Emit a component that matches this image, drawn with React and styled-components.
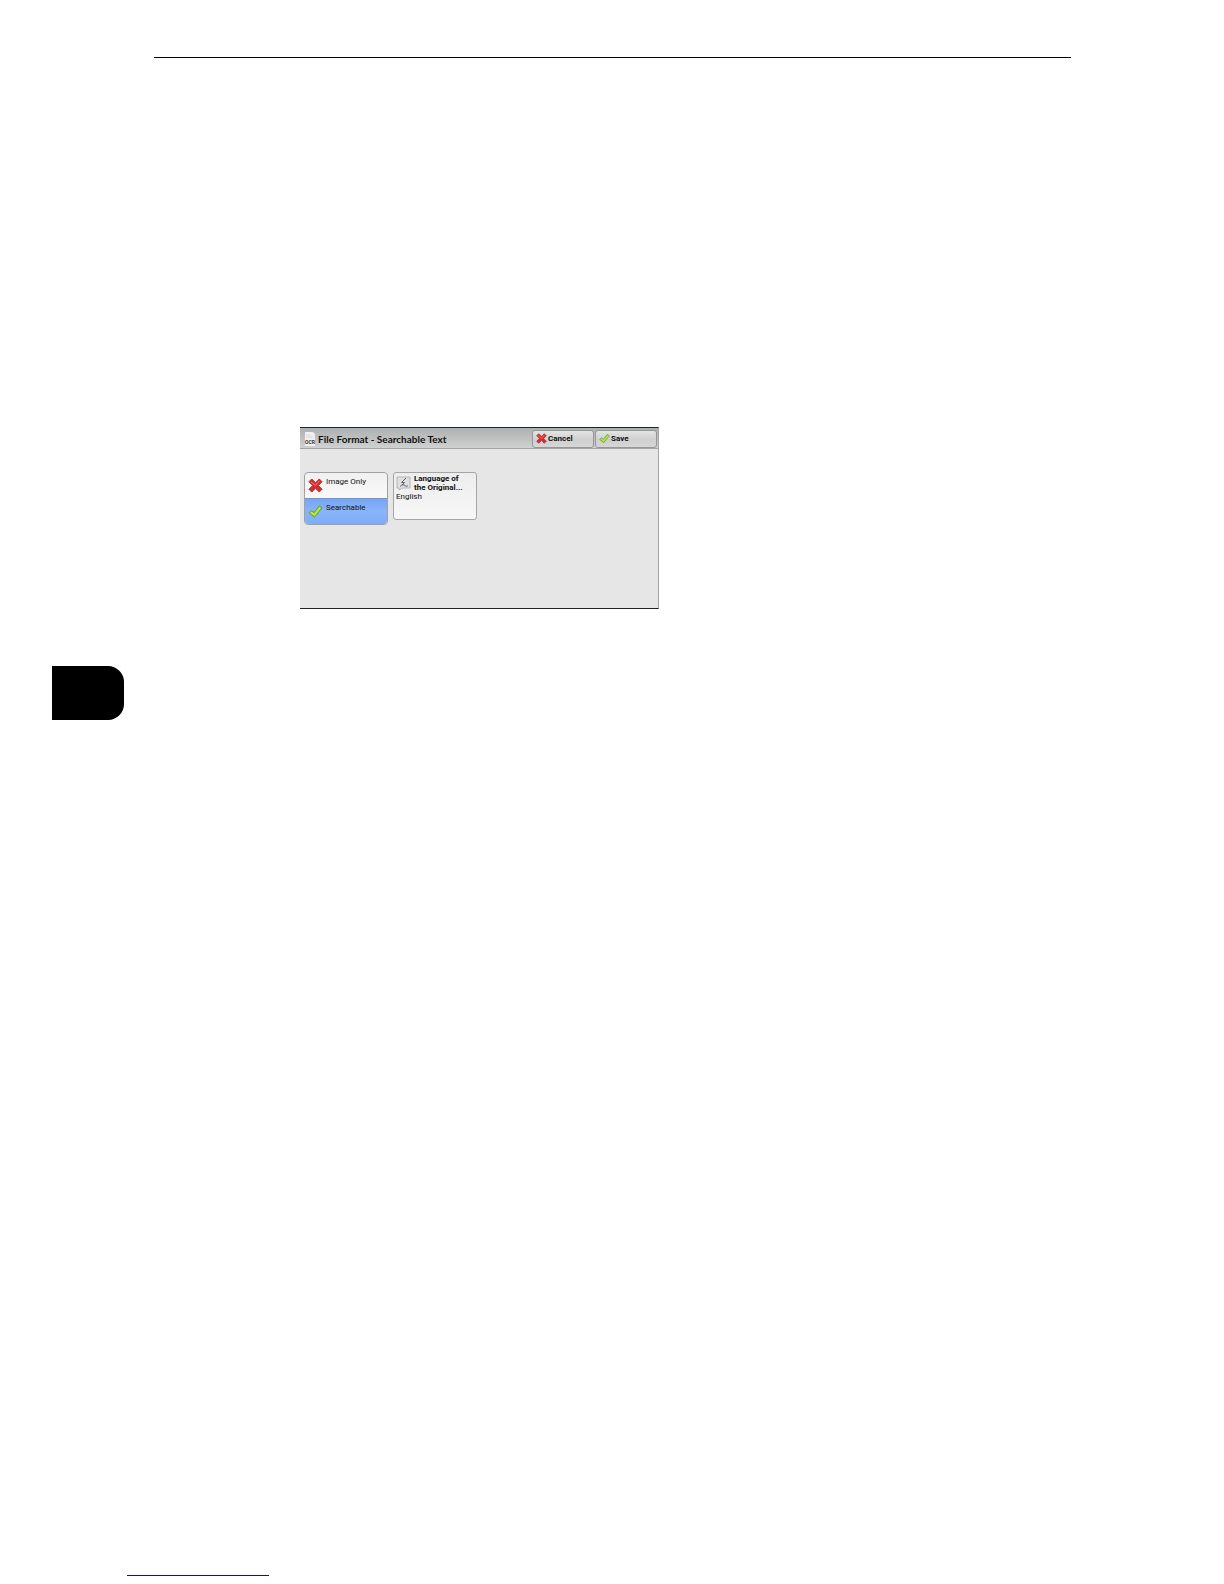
import React, { useState } from "react";
import styled, { createGlobalStyle, css } from "styled-components";

const Global = createGlobalStyle`
  *, *::before, *::after { box-sizing: border-box; }
  body { margin: 0; background: #fff; }
`;

const Page = styled.div`
  display: flex;
  flex-direction: column;
  min-height: 100vh;
  padding: 57px 0 8px;
  font-family: Roboto, "Noto Sans", sans-serif;
  color: #111;
`;

const TopRule = styled.hr`
  width: auto;
  height: 1px;
  margin: 0 153px 0 154px;
  border: 0;
  background: #000;
`;

const Content = styled.main`
  display: flex;
  flex-direction: column;
  flex: 1;
  padding-top: 369px;
`;

const Panel = styled.section`
  width: 100%;
  max-width: 359px;
  margin-left: 300px;
  border-top: 1px solid #20242b;
  border-right: 1px solid #a5a5a5;
  border-bottom: 1px solid #222;
  background: #e6e6e6;
`;

const TitleBar = styled.header`
  display: flex;
  align-items: center;
  gap: 2px;
  height: 21px;
  padding: 1px 1px 0 4px;
  border-bottom: 1px solid #a4a4a4;
  background: linear-gradient(#adb0b0, #d0d1d1);
`;

const Title = styled.h1`
  flex: 1;
  margin: 0;
  font-family: Lato, sans-serif;
  font-size: 10px;
  line-height: 14px;
  font-weight: 700;
  white-space: nowrap;
`;

const Actions = styled.div`
  display: flex;
  gap: 1px;
`;

const buttonReset = css`
  margin: 0;
  font-family: inherit;
  color: inherit;
  text-align: left;
  cursor: pointer;
`;

const ActionButton = styled.button`
  ${buttonReset}
  display: flex;
  align-items: center;
  gap: 1px;
  width: 62px;
  height: 18px;
  padding: 0 3px;
  border: 1px solid #969696;
  border-radius: 3px;
  background: linear-gradient(#e4e4e4, #cfcfcf 55%, #d7d7d7);
  font-size: 8px;
  line-height: 12px;
  font-weight: 700;
`;

const Body = styled.div`
  display: flex;
  align-items: flex-start;
  gap: 5px;
  min-height: 159px;
  padding: 23px 4px;
`;

const Options = styled.fieldset`
  width: 84px;
  min-width: 0;
  margin: 0;
  padding: 0;
  border: 1px solid #a0a0a5;
  border-radius: 4px;
  overflow: hidden;
`;

const Option = styled.label`
  display: flex;
  gap: 3px;
  height: 25px;
  padding: 3px 3px 0;
  background: ${(p) =>
    p.$selected
      ? "linear-gradient(#75a5f4, #8ab4fa 50%, #7eacf6)"
      : "linear-gradient(#f0f0f0, #f9f9f9)"};
  font-size: 8px;
  line-height: 12px;
  cursor: pointer;

  & + & { height: 26px; border-top: 1px solid #7794c8; }
  svg { margin-top: 2px; }
`;

const HiddenRadio = styled.input`
  position: absolute;
  width: 1px;
  height: 1px;
  margin: 0;
  opacity: 0;
`;

const LanguageButton = styled.button`
  ${buttonReset}
  display: flex;
  flex-direction: column;
  width: 84px;
  height: 48px;
  padding: 0 2px;
  border: 1px solid #a5a5a5;
  border-radius: 3px;
  background: linear-gradient(#ededed, #f7f7f7);
  font-size: 8px;
  line-height: 9px;
`;

const LanguageHeading = styled.span`
  display: flex;
  gap: 3px;
  padding-top: 1px;
  font-weight: 700;
  white-space: nowrap;
  svg { margin-top: 2px; }
`;

const SideTab = styled.div`
  width: 72px;
  height: 54px;
  margin: 57px 0 0 52px;
  border-radius: 0 16px 16px 0;
  background: #000;
`;

const FooterLine = styled.footer`
  width: 142px;
  height: 1px;
  margin-left: 127px;
  background: #101078;
`;

const Svg = styled.svg`
  flex: none;
  display: block;
`;

function CrossIcon({ size }) {
  return (
    <Svg width={size} height={size} viewBox="0 0 16 16" aria-hidden="true">
      <path
        d="M1 4 4 1 8 5 12 1 15 4 11 8 15 12 12 15 8 11 4 15 1 12 5 8Z"
        fill="#d92c2a"
        stroke="#a33330"
        strokeWidth="1"
        strokeLinejoin="round"
      />
      <path d="m3 4 5 4 4-5" fill="none" stroke="#f08078" strokeWidth="1" />
    </Svg>
  );
}

function CheckIcon({ size }) {
  return (
    <Svg width={size} height={size} viewBox="0 0 16 16" aria-hidden="true">
      <path
        d="M1 9.500 3.500 7 6.500 9 12 2 15 4 7 14Z"
        fill="#9adf27"
        stroke="#6b9440"
        strokeWidth="1"
        strokeLinejoin="round"
      />
      <path d="m3.500 9 3.500 2.500L13 4" fill="none" stroke="#caf65d" strokeWidth="1" />
    </Svg>
  );
}

const OcrLabel = styled.text`
  font-family: Roboto, sans-serif;
  font-size: 5px;
  font-weight: 700;
  fill: #333;
`;

function OcrIcon() {
  return (
    <Svg width="12" height="14" viewBox="0 0 12 14" aria-hidden="true">
      <path d="M1 0h8l2 2v12H1Z" fill="#f0f0f0" />
      <path d="M2 3h5M2 5h7" stroke="#dadada" strokeWidth="1" />
      <OcrLabel x="1" y="12">OCR</OcrLabel>
    </Svg>
  );
}

function LanguageIcon() {
  return (
    <Svg width="15" height="15" viewBox="0 0 15 15" aria-hidden="true">
      <path d="M1 1h13v11H6l-3 2v-2H1Z" fill="#e0e0e0" stroke="#b4b4b4" />
      <path
        d="M10 2 5.500 6.500h3L6 9m-2 1.500c2-2 4-2 5-1s2 1 3 0"
        fill="none"
        stroke="#606060"
        strokeWidth="1"
      />
    </Svg>
  );
}

const FORMATS = [
  { id: "image", label: "Image Only", Icon: CrossIcon },
  { id: "searchable", label: "Searchable", Icon: CheckIcon },
];

export default function App() {
  const [format, setFormat] = useState("searchable");

  return (
    <Page>
      <Global />
      <TopRule />
      <Content>
        <Panel>
          <TitleBar>
            <OcrIcon />
            <Title>File Format - Searchable Text</Title>
            <Actions>
              <ActionButton type="button">
                <CrossIcon size={11} />
                Cancel
              </ActionButton>
              <ActionButton type="button">
                <CheckIcon size={11} />
                Save
              </ActionButton>
            </Actions>
          </TitleBar>
          <Body>
            <Options>
              {FORMATS.map(({ id, label, Icon }) => (
                <Option key={id} htmlFor={id} $selected={format === id}>
                  <HiddenRadio
                    type="radio"
                    id={id}
                    name="format"
                    checked={format === id}
                    onChange={() => setFormat(id)}
                  />
                  <Icon size={15} />
                  {label}
                </Option>
              ))}
            </Options>
            <LanguageButton type="button">
              <LanguageHeading>
                <LanguageIcon />
                <span>
                  Language of
                  <br />
                  the Original...
                </span>
              </LanguageHeading>
              English
            </LanguageButton>
          </Body>
        </Panel>
        <SideTab />
      </Content>
      <FooterLine />
    </Page>
  );
}
